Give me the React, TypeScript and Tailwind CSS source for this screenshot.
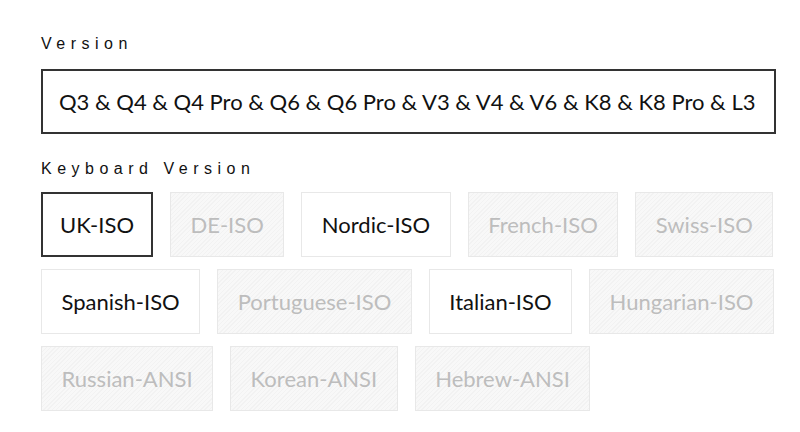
import React from 'react';

interface Option {
  label: string;
  available: boolean;
}

const OPTIONS: Option[] = [
  { label: 'UK-ISO', available: true },
  { label: 'DE-ISO', available: false },
  { label: 'Nordic-ISO', available: true },
  { label: 'French-ISO', available: false },
  { label: 'Swiss-ISO', available: false },
  { label: 'Spanish-ISO', available: true },
  { label: 'Portuguese-ISO', available: false },
  { label: 'Italian-ISO', available: true },
  { label: 'Hungarian-ISO', available: false },
  { label: 'Russian-ANSI', available: false },
  { label: 'Korean-ANSI', available: false },
  { label: 'Hebrew-ANSI', available: false },
];

const labelClass =
  "text-[16px] leading-6 tracking-[5.5px] text-[#111] font-['Liberation_Sans',Arial,sans-serif]";

export default function App() {
  const selected = 'UK-ISO';

  return (
    <div className="w-[800px] h-[432px] bg-white pl-[41px] pr-[20px] pt-[32px] font-['Lato',sans-serif]">
      <p className={labelClass}>Version</p>
      <div className="mt-[13px] h-[65px] w-[735px] border-2 border-[#333] flex items-center px-4 text-[22px] text-[#111]">
        Q3 &amp; Q4 &amp; Q4 Pro &amp; Q6 &amp; Q6 Pro &amp; V3 &amp; V4 &amp; V6 &amp; K8 &amp; K8 Pro &amp; L3
      </div>

      <p className={`${labelClass} mt-[23px]`}>Keyboard Version</p>
      <div className="mt-[11px] flex flex-wrap gap-x-[17px] gap-y-[12px]">
        {OPTIONS.map((opt) => {
          const isSelected = opt.label === selected;
          if (!opt.available) {
            return (
              <div
                key={opt.label}
                className="h-[65px] px-[19.5px] flex items-center border border-[#e8e8e8] text-[22px] text-[#bdbdbd] bg-[repeating-linear-gradient(135deg,#f2f2f2_0px,#f2f2f2_1px,#f8f8f8_1px,#f8f8f8_3px)]"
              >
                {opt.label}
              </div>
            );
          }
          return (
            <div
              key={opt.label}
              className={
                isSelected
                  ? 'h-[65px] px-[17px] flex items-center border-2 border-[#333] text-[22px] text-[#111] bg-white'
                  : 'h-[65px] px-[19.5px] flex items-center border border-[#e8e8e8] text-[22px] text-[#111] bg-white'
              }
            >
              {opt.label}
            </div>
          );
        })}
      </div>
    </div>
  );
}
